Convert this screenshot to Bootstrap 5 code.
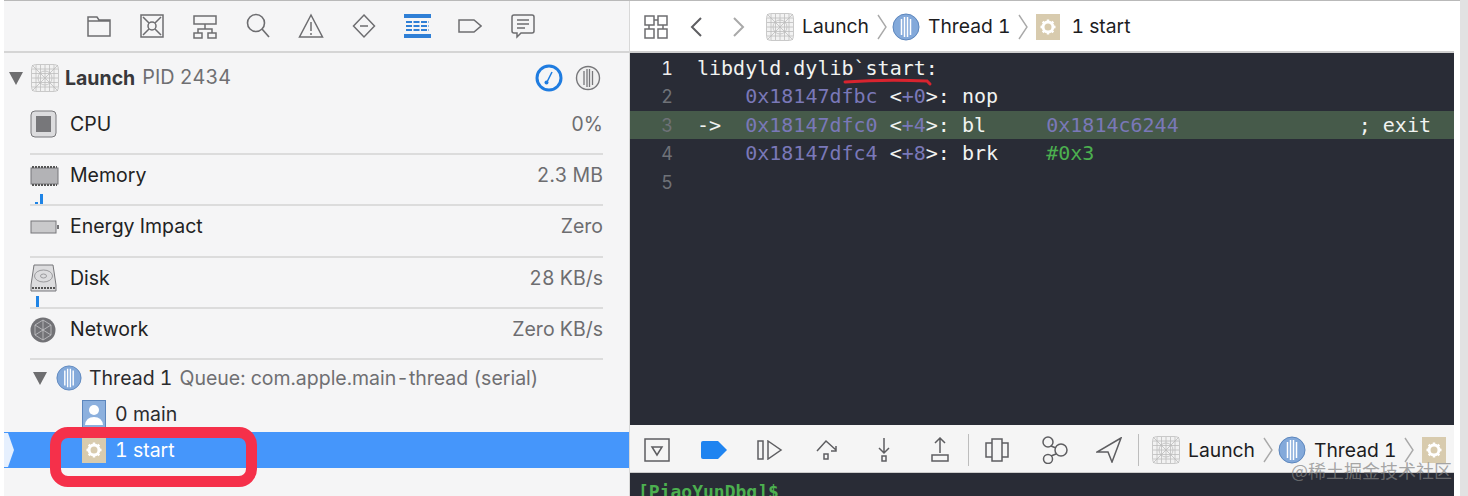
<!DOCTYPE html>
<html lang="en">
<head>
<meta charset="utf-8">
<title>Xcode debug</title>
<link href="https://cdn.jsdelivr.net/npm/bootstrap@5.3.0/dist/css/bootstrap.min.css" rel="stylesheet">
<style>
html,body{height:496px;overflow:hidden;background:#fff}
body{font-family:"Inter","Roboto",sans-serif;font-size:19.5px;color:#2b2b2e;font-variant-numeric:tabular-nums}
.shell{width:1468px;height:496px;position:relative;padding-right:8px}
.shell-inner{height:496px;border-top:1px solid #b9b9b9;margin-left:4px;width:1456px;padding-right:6px}
.side{width:626px;background:#f5f5f6;flex:none;border-right:1px solid #d8d8d8;height:495px}
.side-tools{height:52px;border-bottom:2px solid #d5d5d5;padding-left:68.5px}
.tool{width:53px;height:30px}
.proc-row{height:50.500px;padding:0 28px 0 5px}
.proc-name{font-weight:700;font-size:19.5px;color:#38383b;margin-left:6px}
.proc-pid{color:#6f6f72;margin-left:7px;font-size:19.8px}
.proc-gap{gap:12px}
.tri{width:0;height:0;border-left:7.5px solid transparent;border-right:7.5px solid transparent;border-top:13px solid #6e6e70}
.gauge-row{height:51.400px;margin-left:26px;margin-right:26px;border-bottom:2px solid #dcdcdc;position:relative;padding-bottom:8px}
.gauge-name{margin-left:10px;color:#222}
.gauge-val{margin-left:auto;color:#6d6d70}
.spark{position:absolute;bottom:0;width:3px;background:#1f84e6}
.th-row{height:36px}
.th1{padding-left:29px}
.th1-icon{margin-left:9px;margin-right:7px}
.th-sub{color:#6f6f72;margin-left:7px;font-size:19.5px}
.fr{padding-left:78px}
.fr-sel{background:#4596fb;color:#fff;position:relative;height:36px}
.tip{position:absolute;left:0;top:1px}
.fr-label{margin-left:9px}
.fr-label2{margin-left:9px;font-weight:400}
.mainp{width:824px;flex:none;height:495px}
.top-bar{height:52px;background:#fff;border-bottom:2px solid #cfcfcf;padding-left:14px;padding-top:1px;color:#1d1d1f}
.top-bar span,.dbg-bar span{font-size:19.3px}
.nav-back{margin-left:21px}
.nav-fwd{margin-left:29px}
.nav-app{margin-left:20px}
.last-label{margin-left:11px}
.chev-a{margin-left:8px;margin-right:5px}
.chev-b{margin-left:8px;margin-right:8px}
.editor{height:372px;background:#292c36;font-family:"DejaVu Sans Mono","Liberation Mono",monospace;font-size:20px;color:#f1f3f1;overflow:hidden;padding-top:1px}
.cline{height:28.400px;line-height:28.400px;white-space:pre;position:relative}
.cline.hot{background:#465a4a}
.lnum{display:inline-block;width:43px;text-align:right;color:#6f7278;margin-right:24px;font-family:"Inter",sans-serif;font-size:18px}
.lnum.cur{color:#eee}
.hx{color:#7a78b8}
.gn{color:#4cb04f}
.scrib{position:absolute;left:213px;top:23px}
.exitc{position:absolute;right:23px;top:0}
.dbg-bar{height:48px;background:#f5f5f5;border-bottom:1px solid #ccc;padding-left:14px;padding-top:3px;color:#1d1d1f;position:relative}
.vsep{width:1px;height:32px;background:#bdbdbd;flex:none}
.ml-a{margin-left:31px}.ml-b{margin-left:30px}.ml-c{margin-left:33px}.ml-d{margin-left:35px}.ml-e{margin-left:39px}
.ml-f{margin-left:18px}.ml-g{margin-left:16px}.ml-h{margin-left:28px}.ml-i{margin-left:13px}
.term{height:23px;background:#292c36;overflow:hidden;font-family:"DejaVu Sans Mono",monospace;font-weight:700;font-size:18px;color:#4cb04f;padding:7px 0 0 8px;line-height:24px}
.wm{position:absolute;right:16px;bottom:18px;font-size:18px;color:rgba(130,130,130,.7);font-family:"Noto Sans CJK SC",sans-serif;line-height:16px;z-index:3}
.redbox{position:absolute;left:50px;top:427px;width:207px;height:60px;border:11px solid #f5304a;border-radius:18px;z-index:4}
.right-strip{position:absolute;right:0;top:0;width:8px;height:496px;background:#e2e2e2}
.crumb{flex:none}
svg{display:block;flex:none}
</style>
</head>
<body>
<svg width="0" height="0" class="position-absolute">
<defs>
<symbol id="launch" viewBox="0 0 28 28"><rect x=".5" y=".5" width="27" height="27" rx="4" fill="#f2f2f2" stroke="#c9c9c9"/><path d="M5 1v26M9.500 1v26M14 1v26M18.500 1v26M23 1v26M1 5h26M1 9.500h26M1 14h26M1 18.500h26M1 23h26M1 1l26 26M27 1L1 27" stroke="#bdbdbd" stroke-width=".8" fill="none"/><circle cx="14" cy="14" r="7" fill="none" stroke="#bdbdbd" stroke-width=".8"/></symbol>
<symbol id="thread" viewBox="0 0 28 28"><circle cx="14" cy="14" r="13" fill="#83a9da" stroke="#5c86bd"/><path d="M9.500 6v16M12.500 4v20M15.500 4v20M18.500 6v16" stroke="#fff" stroke-width="1.500"/></symbol>
<symbol id="threadg" viewBox="0 0 26 26"><circle cx="13" cy="13" r="11.500" fill="#f0f0f0" stroke="#77777a" stroke-width="1.400"/><path d="M9 6v14M12 4v18M14.500 4v18M17.500 6v14" stroke="#77777a" stroke-width="1.300"/></symbol>
<symbol id="gear" viewBox="0 0 24 26"><rect width="24" height="26" fill="#d8cbae"/><circle cx="12" cy="13" r="5" fill="none" stroke="#fff" stroke-width="3"/><path d="M12 5.500v3M12 17.500v3M4.500 13h3M16.500 13h3M6.700 7.700l2 2M15.300 16.300l2 2M17.300 7.700l-2 2M8.700 16.300l-2 2" stroke="#fff" stroke-width="2.400"/></symbol>
<symbol id="chev" viewBox="0 0 10 26"><path d="M1 1l8 12-8 12" fill="none" stroke="#a9a9a9" stroke-width="1.400"/></symbol>
</defs>
</svg>
<div class="shell">
<div class="right-strip"></div>
<div class="shell-inner d-flex">
  <aside class="side">
    <div class="side-tools d-flex align-items-center">
      <div class="tool d-flex justify-content-center align-items-center"><svg width="26" height="22" fill="none" stroke="#6d6d70" stroke-width="1.500"><path d="M2 2h9l2 3h11v16H2zM2 6h22"/></svg></div>
      <div class="tool d-flex justify-content-center align-items-center"><svg width="24" height="26" fill="none" stroke="#6d6d70" stroke-width="1.500"><rect x="1" y="2" width="22" height="22"/><circle cx="12" cy="13" r="4"/><path d="M3 4l6 6M21 4l-6 6M3 22l6-6M21 22l-6-6"/></svg></div>
      <div class="tool d-flex justify-content-center align-items-center"><svg width="24" height="26" fill="none" stroke="#6d6d70" stroke-width="1.500"><path d="M1 3h22v8H1zM12 11v5M5 20v-4h14v4M1 20h8v5H1zM15 20h8v5h-8z"/></svg></div>
      <div class="tool d-flex justify-content-center align-items-center"><svg width="24" height="26" fill="none" stroke="#6d6d70" stroke-width="1.600"><circle cx="10" cy="10" r="8.500"/><path d="M16 16l7 8"/></svg></div>
      <div class="tool d-flex justify-content-center align-items-center"><svg width="26" height="26" fill="none" stroke="#6d6d70" stroke-width="1.500"><path d="M13 2l11.500 22h-23zM13 9v9M13 20v2"/></svg></div>
      <div class="tool d-flex justify-content-center align-items-center"><svg width="26" height="26" fill="none" stroke="#6d6d70" stroke-width="1.500"><path d="M13 2l10.500 11L13 24 2.500 13zM9 13h8"/></svg></div>
      <div class="tool d-flex justify-content-center align-items-center"><svg width="27" height="24"><rect width="27" height="4" fill="#2f7fd6"/><rect y="20" width="27" height="4" fill="#2f7fd6"/><path d="M2 8h23M2 12h23M2 16h23" stroke="#2f7fd6" stroke-width="2" stroke-dasharray="6 1.500"/></svg></div>
      <div class="tool d-flex justify-content-center align-items-center"><svg width="24" height="16" fill="none" stroke="#6d6d70" stroke-width="1.500"><path d="M1 2h15l7 6-7 6H1z"/></svg></div>
      <div class="tool d-flex justify-content-center align-items-center"><svg width="24" height="26" fill="none" stroke="#6d6d70" stroke-width="1.500"><path d="M3 2h18q2 0 2 2v14q0 2-2 2H10l-4 4v-4H3q-2 0-2-2V4q0-2 2-2zM6 7h12M6 11h12M6 15h8"/></svg></div>
    </div>
    <div class="proc-row d-flex align-items-center">
      <div class="tri me-2"></div>
      <svg width="28" height="28"><use href="#launch"/></svg>
      <span class="proc-name">Launch</span><span class="proc-pid">PID 2434</span>
      <div class="ms-auto d-flex align-items-center proc-gap">
        <svg width="28" height="28" fill="none"><circle cx="14" cy="14" r="12" stroke="#1f7ce0" stroke-width="3"/><path d="M12 18l5-10" stroke="#1f7ce0" stroke-width="1.500"/><circle cx="11.500" cy="18.500" r="2" fill="#1f7ce0"/></svg>
        <svg width="26" height="26"><use href="#threadg"/></svg>
      </div>
    </div>
    <div class="gauge-row d-flex align-items-center">
      <svg width="30" height="28"><rect x="1" y="1" width="25" height="26" rx="4" fill="#dcdcde" stroke="#77777a"/><rect x="6" y="6" width="15" height="16" fill="#77777a"/></svg>
      <span class="gauge-name">CPU</span><span class="gauge-val">0%</span>
    </div>
    <div class="gauge-row d-flex align-items-center">
      <svg width="30" height="22"><rect x="1" y="3" width="27" height="16" fill="#b3b3b6" stroke="#77777a"/><path d="M2 2h25M2 20h25" stroke="#555" stroke-dasharray="2 1" stroke-width="2"/></svg>
      <span class="gauge-name">Memory</span><span class="gauge-val">2.3 MB</span>
      <span class="spark" style="left:10px;height:10px"></span><span class="spark" style="left:5px;height:2px"></span>
    </div>
    <div class="gauge-row d-flex align-items-center">
      <svg width="30" height="14"><rect x="1" y="1" width="25" height="12" fill="#c9c9cb" stroke="#77777a"/><path d="M27 5h2v4h-2z" fill="#77777a"/></svg>
      <span class="gauge-name">Energy Impact</span><span class="gauge-val">Zero</span>
    </div>
    <div class="gauge-row d-flex align-items-center">
      <svg width="30" height="28"><path d="M4 1h19l3 20v6H1v-6z" fill="#dcdcde" stroke="#77777a"/><ellipse cx="13.500" cy="12" rx="9" ry="6" fill="none" stroke="#9a9a9d"/><ellipse cx="13.500" cy="12" rx="3" ry="2" fill="none" stroke="#9a9a9d"/><path d="M2 24h23" stroke="#555" stroke-width="2" stroke-dasharray="2 1"/></svg>
      <span class="gauge-name">Disk</span><span class="gauge-val">28 KB/s</span>
      <span class="spark" style="left:6px;height:11px"></span>
    </div>
    <div class="gauge-row d-flex align-items-center">
      <svg width="30" height="26"><circle cx="13" cy="13" r="12.500" fill="#727276"/><path d="M13 3l8 5v10l-8 5-8-5V8zM13 3v20M5 8l16 10M21 8L5 18" stroke="#c4c4c6" stroke-width=".8" fill="none"/></svg>
      <span class="gauge-name">Network</span><span class="gauge-val">Zero KB/s</span>
    </div>
    <div class="th-row th1 d-flex align-items-center">
      <div class="tri"></div>
      <svg width="26" height="26" class="th1-icon"><use href="#thread"/></svg>
      <span>Thread 1</span><span class="th-sub">Queue: com.apple.main-thread (serial)</span>
    </div>
    <div class="th-row fr d-flex align-items-center">
      <svg width="24" height="28"><rect x=".5" y=".5" width="23" height="27" fill="#8cb0de" stroke="#5c86bd"/><circle cx="12" cy="10" r="5" fill="#fff"/><path d="M3 25q1-8 9-8t9 8z" fill="#fff"/></svg>
      <span class="fr-label">0 main</span>
    </div>
    <div class="fr fr-sel d-flex align-items-center">
      <svg class="tip" width="11" height="34"><path d="M0 0h4l6 17-6 17H0z" fill="#e6f0fe"/></svg>
      <svg width="24" height="26"><use href="#gear"/></svg>
      <span class="fr-label2">1 start</span>
    </div>
  </aside>
  <main class="mainp">
    <div class="top-bar d-flex align-items-center">
      <svg width="24" height="24" fill="none" stroke="#6d6d70" stroke-width="1.500"><path d="M1 1h9v9H1zM14 1h9v9h-9zM1 14h9v9H1zM14 14h9v9h-9zM10 5h4M5 10v4M19 10v4"/></svg>
      <svg width="14" height="22" class="crumb nav-back" fill="none" stroke="#5e5e61" stroke-width="2"><path d="M12 2L3 11l9 9"/></svg>
      <svg width="14" height="22" class="crumb nav-fwd" fill="none" stroke="#a9a9a9" stroke-width="2"><path d="M2 2l9 9-9 9"/></svg>
      <svg width="28" height="28" class="crumb nav-app"><use href="#launch"/></svg>
      <span class="ms-2">Launch</span>
      <svg width="10" height="26" class="chev-a"><use href="#chev"/></svg>
      <svg width="28" height="28"><use href="#thread"/></svg>
      <span class="ms-2">Thread 1</span>
      <svg width="10" height="26" class="chev-b"><use href="#chev"/></svg>
      <svg width="24" height="26"><use href="#gear"/></svg>
      <span class="last-label">1 start</span>
    </div>
    <div class="editor">
      <div class="cline"><span class="lnum cur">1</span>libdyld.dylib`start:<svg class="scrib position-absolute" width="90" height="10" fill="none"><path d="M2 5q40-3 82-1l3 3" stroke="#d8242f" stroke-width="3" stroke-linecap="round"/></svg></div>
      <div class="cline"><span class="lnum">2</span>    <span class="hx">0x18147dfbc</span> &lt;<span class="hx">+0</span>&gt;: nop</div>
      <div class="cline hot"><span class="lnum">3</span>-&gt;  <span class="hx">0x18147dfc0</span> &lt;<span class="hx">+4</span>&gt;: bl     <span class="hx">0x1814c6244</span><span class="exitc">; exit</span></div>
      <div class="cline"><span class="lnum">4</span>    <span class="hx">0x18147dfc4</span> &lt;<span class="hx">+8</span>&gt;: brk    <span class="gn">#0x3</span></div>
      <div class="cline"><span class="lnum">5</span></div>
    </div>
    <div class="dbg-bar d-flex align-items-center">
      <svg width="26" height="24" fill="none" stroke="#5e5e61" stroke-width="1.500"><rect x="1" y="1" width="24" height="22"/><path d="M8 9h10l-5 8z"/></svg>
      <svg width="26" height="18" class="ml-a"><path d="M0 2q0-2 2-2h15l9 9-9 9H2q-2 0-2-2z" fill="#1f84f0"/></svg>
      <svg width="26" height="20" class="ml-b" fill="none" stroke="#5e5e61" stroke-width="1.500"><path d="M1 1h5v18H1zM11 1l13 9-13 9z"/></svg>
      <svg width="26" height="24" class="ml-c" fill="none" stroke="#5e5e61" stroke-width="1.500"><path d="M1 13L10 3l10 9M20 8v5h-5M8 16h4v5H8z"/></svg>
      <svg width="14" height="26" class="ml-d" fill="none" stroke="#5e5e61" stroke-width="1.500"><path d="M7 1v15M2 11l5 5 5-5M5 19h4v5H5z"/></svg>
      <svg width="20" height="26" class="ml-e" fill="none" stroke="#5e5e61" stroke-width="1.500"><path d="M10 16V1M5 6l5-5 5 5M2 18h16v6H2z"/></svg>
      <div class="vsep ml-f"></div>
      <svg width="24" height="24" class="ml-g" fill="none" stroke="#5e5e61" stroke-width="1.500"><path d="M7 1h10v22H7zM7 5H1v14h6M17 5h6v14h-6"/></svg>
      <svg width="28" height="28" class="ml-a" fill="none" stroke="#5e5e61" stroke-width="1.500"><circle cx="8" cy="6" r="5"/><circle cx="21" cy="14" r="6"/><circle cx="8" cy="23" r="4.500"/><path d="M11 10l5 2M11 20l5-2"/></svg>
      <svg width="26" height="26" class="ml-h" fill="none" stroke="#5e5e61" stroke-width="1.500"><path d="M25 1L1 15h11l4 10z"/></svg>
      <div class="vsep ml-g"></div>
      <svg width="28" height="28" class="ml-i"><use href="#launch"/></svg>
      <span class="ms-2">Launch</span>
      <svg width="10" height="26" class="chev-a"><use href="#chev"/></svg>
      <svg width="28" height="28"><use href="#thread"/></svg>
      <span class="ms-2">Thread 1</span>
      <svg width="10" height="26" class="chev-b"><use href="#chev"/></svg>
      <svg width="24" height="26"><use href="#gear"/></svg>
    </div>
    <div class="term">[PiaoYunDbg]$</div>
  </main>
</div>
<div class="wm">@稀土掘金技术社区</div>
<div class="redbox"></div>
</div>
</body>
</html>
